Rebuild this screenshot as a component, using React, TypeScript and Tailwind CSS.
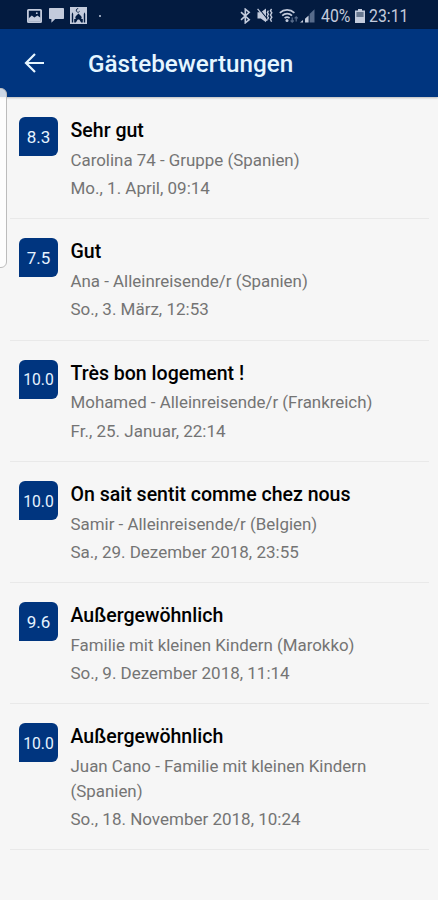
import { clsx } from 'clsx';

type Review = {
    score: string;
    title: string;
    guest: string;
    date: string;
};

const reviews: Review[] = [
    {
        score: '8.3',
        title: 'Sehr gut',
        guest: 'Carolina 74 - Gruppe (Spanien)',
        date: 'Mo., 1. April, 09:14',
    },
    {
        score: '7.5',
        title: 'Gut',
        guest: 'Ana - Alleinreisende/r (Spanien)',
        date: 'So., 3. März, 12:53',
    },
    {
        score: '10.0',
        title: 'Très bon logement !',
        guest: 'Mohamed - Alleinreisende/r (Frankreich)',
        date: 'Fr., 25. Januar, 22:14',
    },
    {
        score: '10.0',
        title: 'On sait sentit comme chez nous',
        guest: 'Samir - Alleinreisende/r (Belgien)',
        date: 'Sa., 29. Dezember 2018, 23:55',
    },
    {
        score: '9.6',
        title: 'Außergewöhnlich',
        guest: 'Familie mit kleinen Kindern (Marokko)',
        date: 'So., 9. Dezember 2018, 11:14',
    },
    {
        score: '10.0',
        title: 'Außergewöhnlich',
        guest: 'Juan Cano - Familie mit kleinen Kindern (Spanien)',
        date: 'So., 18. November 2018, 10:24',
    },
];

function NotificationIcons() {
    return (
        <div className="flex items-center">
            <svg width="15" height="14" viewBox="0 0 15 14" fill="none">
                <rect x="0.9" y="0.9" width="13.2" height="12.2" rx="0.6" stroke="currentColor" strokeWidth="1.8" />
                <path d="M1.5 9.4 4.8 6.6l2.6 2 3-2.2 3.1 2.4V12.5h-12z" fill="currentColor" />
                <circle cx="9.8" cy="4.2" r="0.9" fill="currentColor" />
            </svg>
            <svg width="15" height="15" viewBox="0 0 15 15" className="ml-[7px]" fill="currentColor">
                <path d="M.8 0h13.4a.8.8 0 0 1 .8.8v9.4a.8.8 0 0 1-.8.8H6.2L2.4 14.8V11H.8a.8.8 0 0 1-.8-.8V.8A.8.8 0 0 1 .8 0Z" />
            </svg>
            <svg width="17" height="17" viewBox="0 0 17 17" className="ml-[6px]">
                <rect width="17" height="17" fill="currentColor" />
                <g fill="#031b40">
                    <path d="M8.5 6.5c.5 1.1 3.2 2 3.2 4 0 .8-.4 1.3-.8 1.7H6.1c-.4-.4-.8-.9-.8-1.7 0-2 2.7-2.9 3.2-4Z" />
                    <path d="M1.8 15.5V7l.7-1.8.7 1.8v8.5zM13.8 15.5V7l.7-1.8.7 1.8v8.5zM4.2 15.5V12h8.6v3.5h-1.6l-1.2-1.7a1.5 1.5 0 0 0-3 0l-1.2 1.7z" />
                </g>
                <path d="M9.6 4.3a1.8 1.8 0 1 1-1.4-2.7" stroke="#031b40" strokeWidth="0.9" fill="none" />
            </svg>
            <span className="ml-3 h-[2px] w-[2px] rounded-full bg-current" />
        </div>
    );
}

function SystemIcons() {
    return (
        <div className="flex items-center">
            <svg width="11" height="16" viewBox="0 0 11 16" fill="none" stroke="currentColor" strokeWidth="1.6">
                <path d="m1 4.2 8.2 7.4-3.9 3.2V1.2l3.9 3.2L1 11.8" />
            </svg>
            <svg width="16" height="15" viewBox="0 0 16 15" className="ml-[6px]" fill="none">
                <path d="M.5 4.3h3.3L9 .6v13.6l-5.2-3.8H.5z" fill="currentColor" />
                <path d="m1.4 0 9.4 11.6" stroke="#031b40" strokeWidth="1.1" />
                <path d="m.6.8 9.6 12" stroke="currentColor" strokeWidth="1.3" />
                <path
                    d="m11.4 2.6-1 1.8 1 1.8-1 1.8 1 1.8-1 1.8M14.6 1l-1.2 1.8 1.4 2-1.4 2.2 1.4 2.2-1.4 2.2 1.2 2.4"
                    stroke="currentColor"
                    strokeWidth="1.4"
                />
            </svg>
            <svg width="20" height="16" viewBox="0 0 20 16" className="ml-[6px]" fill="none">
                <path
                    d="M.8 4.8a10.7 10.7 0 0 1 14.6 0M3.2 7.6a7.2 7.2 0 0 1 9.8 0M5.6 10.2a3.8 3.8 0 0 1 5 0"
                    stroke="currentColor"
                    strokeWidth="1.7"
                />
                <circle cx="8" cy="12.6" r="1.5" fill="currentColor" />
                <path
                    d="M13.2 9.5v4.6m-1.6-1.6 1.6 1.6 1.6-1.6M17.2 13.4V8.8m-1.6 1.6 1.6-1.6 1.6 1.6"
                    stroke="#576b8b"
                    strokeWidth="1.2"
                />
            </svg>
            <svg width="15" height="15" viewBox="0 0 15 15" className="ml-[1px]">
                <path d="M0 14.5 3 12v2.5zM5 10.7l3.6-3.2v7H5z" fill="currentColor" />
                <path d="M9.6 6 14.5 1.2v13.3H9.6z" fill="#576b8b" />
            </svg>
            <span className="ml-[6px] w-[29px] text-[18px] leading-none whitespace-nowrap">
                <span className="inline-block origin-left scale-x-[0.88]">40%</span>
            </span>
            <svg width="10" height="14" viewBox="0 0 10 14" className="ml-[5px]">
                <path d="M3 0h4v1.6h3V14H0V1.6h3z" fill="currentColor" />
                <path d="M1.4 3h7.2v5H1.4z" fill="#687890" />
            </svg>
            <span className="ml-[4px] w-[39px] text-[18px] leading-none whitespace-nowrap">
                <span className="inline-block origin-left scale-x-[0.88]">23:11</span>
            </span>
        </div>
    );
}

function StatusBar() {
    return (
        <div className="flex h-[29px] items-center justify-between bg-[#031b40] pt-[2px] pr-[30px] pl-[27px] text-[#c3cbdc]">
            <NotificationIcons />
            <SystemIcons />
        </div>
    );
}

function ReviewItem({ review }: { review: Review }) {
    return (
        <li className="mr-[9px] ml-[10px] flex gap-[12.5px] border-b border-[#e9e9e9] pt-[19px] pr-10 pb-[17.2px] pl-[9px]">
            <div
                className={clsx(
                    'flex size-[39px] shrink-0 items-center justify-center rounded-[6px] rounded-bl-none bg-[#00357f] pt-[2px] text-[#e6f3ff]',
                    review.score.length > 3 ? 'text-[15.7px]' : 'text-[17px]',
                )}
            >
                {review.score}
            </div>
            <div className="min-w-0 text-[16.9px] leading-[25px] text-[#747474]">
                <h2 className="mt-[1px] text-[19.55px] font-medium whitespace-nowrap text-black">{review.title}</h2>
                <p className="mt-[4.8px]">{review.guest}</p>
                <p className="mt-[3.2px] text-[17px]">{review.date}</p>
            </div>
        </li>
    );
}

export default function App() {
    return (
        <main className="relative h-[900px] w-[438px] overflow-hidden bg-[#f6f6f6] font-[Roboto,sans-serif]">
            <StatusBar />
            <header className="flex h-[68px] items-center bg-[#00357f] pl-6 text-white shadow-[0_1px_2px_rgba(0,0,0,0.25)]">
                <svg width="21" height="20" viewBox="0 0 21 20" fill="none" stroke="#e6f6ff" strokeWidth="2.2">
                    <path d="M20 10H2M11 1 2 10l9 9" />
                </svg>
                <h1 className="ml-[43px] pt-[3px] text-[24.25px] font-medium text-[#e6f6ff]">Gästebewertungen</h1>
            </header>

            <ul className="pt-[1.3px]">
                {reviews.map((review, index) => (
                    <ReviewItem key={index} review={review} />
                ))}
            </ul>

            {/* edge panel handle */}
            <div className="absolute top-[88px] -left-2 h-[180px] w-[15px] rounded-[6px] border border-[#bcbcbc] bg-white/80" />
        </main>
    );
}
